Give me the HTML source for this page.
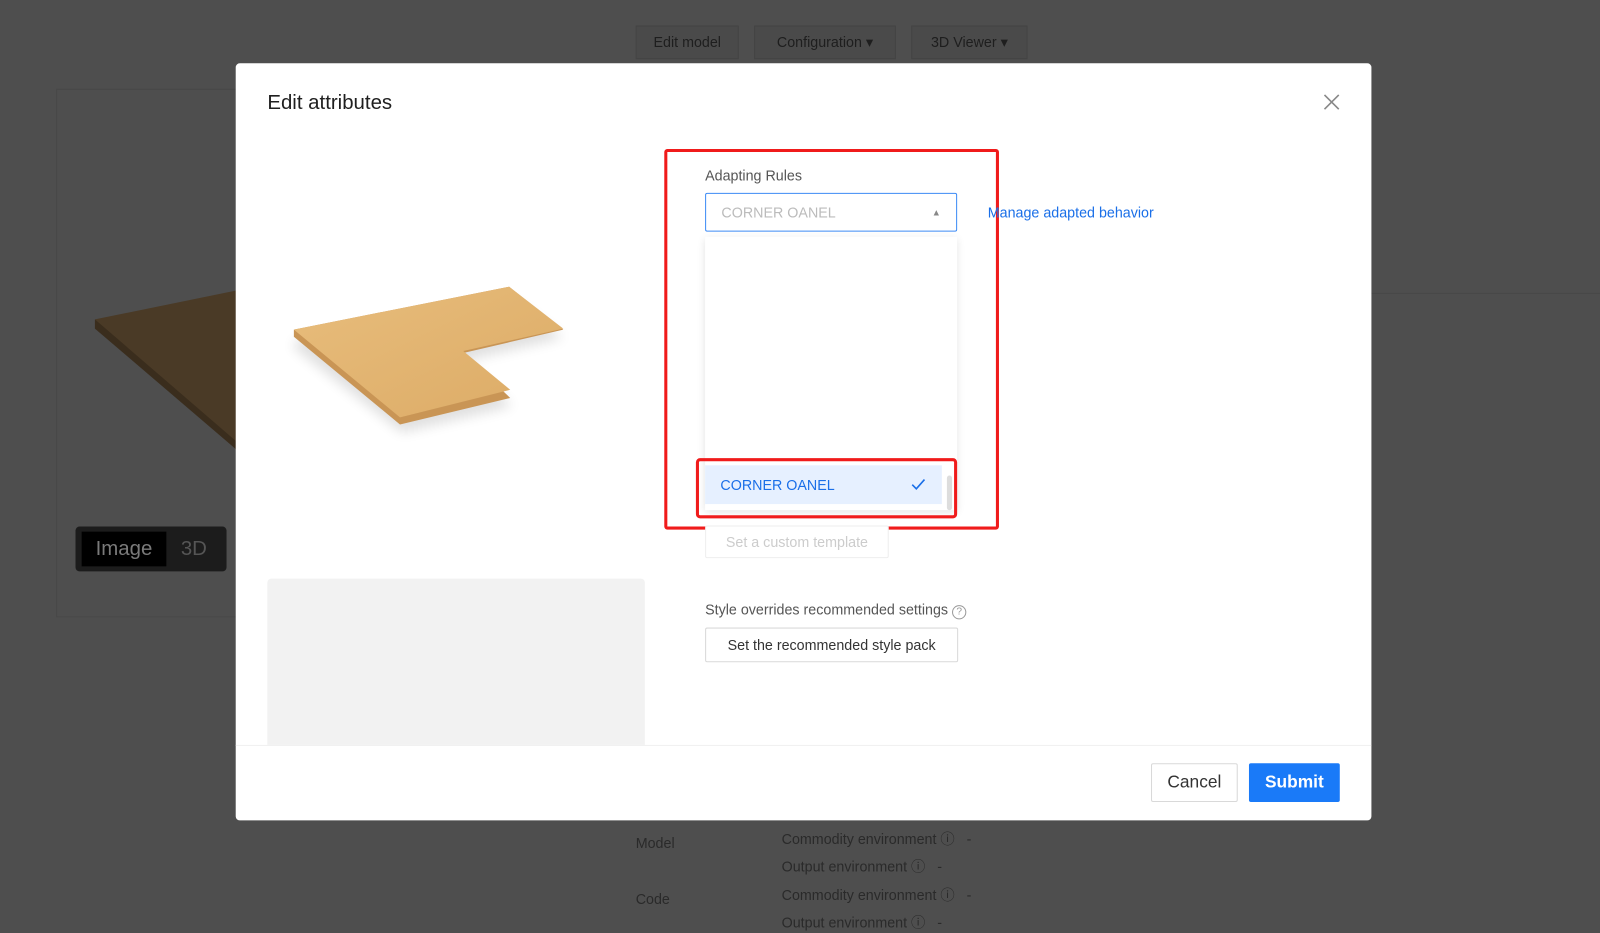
<!DOCTYPE html>
<html><head><meta charset="utf-8"><style>
*{box-sizing:border-box;margin:0;padding:0}
html,body{width:1600px;height:927px;overflow:hidden;background:#4e4e4e;font-family:"Liberation Sans",sans-serif}
#w{position:absolute;left:0;top:0;width:1568px;height:908px;transform:scale(1.0204);transform-origin:0 0}
.a{position:absolute}
.bgbtn{position:absolute;top:25px;height:33px;border:1px solid #444;background:#4a4a4a;color:#1e1e1e;font-size:14px;line-height:31px;text-align:center}
.dk{color:#2a2a2a;font-size:14px}
.btn{position:absolute;border:1px solid #d9d9d9;border-radius:2px;background:#fff;font-size:14px;text-align:center}
</style></head><body><div id="w">
<div class="bgbtn" style="left:623px;width:101px">Edit model</div>
<div class="bgbtn" style="left:739px;width:139px">Configuration ▾</div>
<div class="bgbtn" style="left:893px;width:114px">3D Viewer ▾</div>
<div class="a" style="left:55px;top:87px;width:200px;height:518px;border:1px solid #484848"></div>
<svg class="a" style="left:0;top:0" width="240" height="600"><polygon points="93,313 240,283 240,445 231,440" fill="#4a3a26"/><polygon points="93,313 93,322 231,440 231,432" fill="#3a2d1d"/></svg>
<div class="a" style="left:74px;top:516px;width:148px;height:44px;background:#1c1c1c;border-radius:4px"></div>
<div class="a" style="left:80px;top:521px;width:83px;height:34px;background:#000;color:#7a7a7a;font-size:20px;line-height:34px;text-align:center">Image</div>
<div class="a" style="left:170px;top:521px;width:40px;height:34px;color:#555;font-size:20px;line-height:34px;text-align:center">3D</div>
<div class="a" style="left:1344px;top:287px;width:224px;height:1px;background:#484848"></div>
<div class="a dk" style="left:623px;top:818px">Model</div>
<div class="a dk" style="left:623px;top:873px">Code</div>
<div class="a dk" style="left:766px;top:812px">Commodity environment ⓘ &nbsp; -</div>
<div class="a dk" style="left:766px;top:839px">Output environment ⓘ &nbsp; -</div>
<div class="a dk" style="left:766px;top:867px">Commodity environment ⓘ &nbsp; -</div>
<div class="a dk" style="left:766px;top:894px">Output environment ⓘ &nbsp; -</div>

<div class="a" style="left:231px;top:62px;width:1113px;height:742px;background:#fff;border-radius:4px">
  <div class="a" style="left:31px;top:28px;font-size:20px;color:#1f1f1f">Edit attributes</div>
  <svg class="a" style="left:1066px;top:30px" width="16" height="16"><path d="M1 1L15 15M15 1L1 15" stroke="#888" stroke-width="1.6"/></svg>
  <svg class="a" style="left:31px;top:78px" width="370" height="400">
    <defs><linearGradient id="g" x1="0" y1="0" x2="1" y2="1"><stop offset="0" stop-color="#e8bd7c"/><stop offset="1" stop-color="#dcab66"/></linearGradient>
    <filter id="s"><feGaussianBlur stdDeviation="6"/></filter></defs>
    <polygon points="30,192 240,154 290,191 192,214 240,258 132,284 25,200" fill="#000" opacity=".12" filter="url(#s)"/>
    <polygon points="26,183 237,141 290,183 192,206 238,250 130,276 26,190" fill="#c99555"/>
    <polygon points="26,183 237,141 290,182 192,204 238,242 130,269" fill="url(#g)"/>
  </svg>
  <div class="a" style="left:31px;top:505px;width:370px;height:163px;background:#f2f2f2;border-radius:4px 4px 0 0"></div>
  <div class="a" style="left:0;top:668px;width:1113px;height:1px;background:#f0f0f0"></div>
  <div class="btn" style="left:897px;top:686px;width:85px;height:38px;line-height:36px;font-size:17px;color:#333">Cancel</div>
  <div class="a" style="left:993px;top:686px;width:89px;height:38px;background:#1a7af8;border-radius:2px;color:#fff;font-size:17px;font-weight:bold;line-height:38px;text-align:center">Submit</div>

  <div class="a" style="left:460px;top:102px;font-size:14px;color:#555">Adapting Rules</div>
  <div class="a" style="left:460px;top:127px;width:247px;height:38px;border:1px solid #3d8bf5;border-radius:2px;font-size:14px;color:#bbb;line-height:36px;padding-left:15px">CORNER OANEL<span style="position:absolute;right:15px;font-size:9px;color:#888">▲</span></div>
  <div class="a" style="left:460px;top:170px;width:247px;height:268px;background:#fff;box-shadow:0 2px 8px rgba(0,0,0,.12)"></div>
  <div class="a" style="left:460px;top:394px;width:232px;height:38px;background:#e6f0ff;color:#1a6fe8;font-size:14px;line-height:38px;padding-left:15px">CORNER OANEL</div>
  <svg class="a" style="left:662px;top:407px" width="14" height="12"><path d="M1 6L5 10L13 1" stroke="#1a6fe8" stroke-width="1.6" fill="none"/></svg>
  <div class="a" style="left:697px;top:404px;width:5px;height:34px;background:#ddd;border-radius:3px"></div>
  <div class="a" style="left:420px;top:84px;width:328px;height:373px;border:3px solid #f01b1b;border-radius:3px"></div>
  <div class="a" style="left:451px;top:387px;width:256px;height:59px;border:3px solid #f01b1b;border-radius:4px"></div>
  <div class="a" style="left:737px;top:138px;font-size:14px;color:#1a6fe8">Manage adapted behavior</div>
  <div class="btn" style="left:460px;top:453px;width:180px;height:32px;line-height:30px;color:#ccc;border-color:#eee">Set a custom template</div>
  <div class="a" style="left:460px;top:527px;font-size:14px;color:#555">Style overrides recommended settings <span style="display:inline-block;width:14px;height:14px;border:1px solid #999;border-radius:50%;font-size:10px;line-height:12px;text-align:center;color:#999">?</span></div>
  <div class="btn" style="left:460px;top:553px;width:248px;height:34px;line-height:32px;color:#333">Set the recommended style pack</div>
</div>
</div></body></html>
